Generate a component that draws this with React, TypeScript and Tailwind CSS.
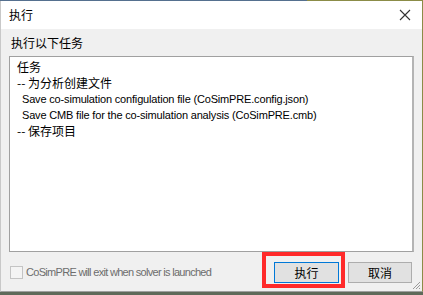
import React from "react";

const cjk = { fontFamily: '"Microsoft YaHei", "Noto Sans CJK SC", sans-serif' };
const lat = { fontFamily: '"Liberation Sans", "Noto Sans CJK SC", sans-serif' };

export default function App() {
  return (
    <div className="w-[423px] h-[295px] flex flex-col bg-[#5f6a5a] overflow-hidden" style={cjk}>
      <div className="flex h-px shrink-0">
        <div className="w-[307px] bg-[#55708f]" />
        <div className="flex-1 bg-[#8b8c47]" />
      </div>
      <div className="flex flex-col h-[291px] border-l border-l-[#c8c8c8] border-r border-r-[#8b8c47] border-b border-b-[#a0a0a0]">
        <div className="h-[28px] bg-white flex items-center justify-between pl-[8px] pr-[10px] shrink-0">
          <span className="text-[12px] text-black leading-none">执行</span>
          <svg width="12" height="12" viewBox="0 0 12 12" className="mr-[1px]">
            <path d="M1 1 L11 11 M11 1 L1 11" stroke="#333" strokeWidth="1.1" />
          </svg>
        </div>
        <div className="flex-1 bg-[#f0f0f0] flex flex-col relative">
          <div className="pl-[10px] pt-[5px] h-[27px] text-[12px] text-black leading-[18px]">执行以下任务</div>
          <div className="mx-[8px] h-[196px] bg-white border border-[#a0a0a0] border-r-[2px] border-r-[#b4b4b4] pl-[7px] pt-[2px] text-[12px] leading-[16px] text-black">
            <div>任务</div>
            <div>-- 为分析创建文件</div>
            <div className="pl-[5px] text-[11px] tracking-[-0.17px]" style={lat}>Save co-simulation configulation file (CoSimPRE.config.json)</div>
            <div className="pl-[5px] text-[11px] tracking-[-0.17px]" style={lat}>Save CMB file for the co-simulation analysis (CoSimPRE.cmb)</div>
            <div>-- 保存项目</div>
          </div>
          <div className="flex items-start pl-[9px] pr-[10px] h-[38px]">
            <div className="mt-[14px] w-[13px] h-[13px] border border-[#c4c4c4] bg-[#f4f4f4]" />
            <span className="mt-[13px] ml-[3px] text-[11px] leading-[15px] text-[#6d6d6d] tracking-[-0.7px]" style={lat}>CoSimPRE will exit when solver is launched</span>
            <div className="flex-1" />
            <div className="border-[4px] border-[#ff2a2a] pl-[8px] pr-[2px] pt-[6px] pb-[1px]">
              <div className="w-[65px] h-[21px] bg-[#e1e1e1] border border-[#0078d7] flex items-center justify-center text-[12px] text-black">执行</div>
            </div>
            <div className="mt-[10px] ml-[3px] w-[64px] h-[21px] bg-[#e1e1e1] border border-[#adadad] flex items-center justify-center text-[12px] text-black">取消</div>
          </div>
          <svg className="absolute right-[1px] bottom-[1px]" width="10" height="10" viewBox="0 0 10 10">
            <path d="M9 2 L2 9 M9 5 L5 9 M9 8 L8 9" stroke="#9a9a9a" strokeWidth="1" />
          </svg>
        </div>
      </div>
    </div>
  );
}
